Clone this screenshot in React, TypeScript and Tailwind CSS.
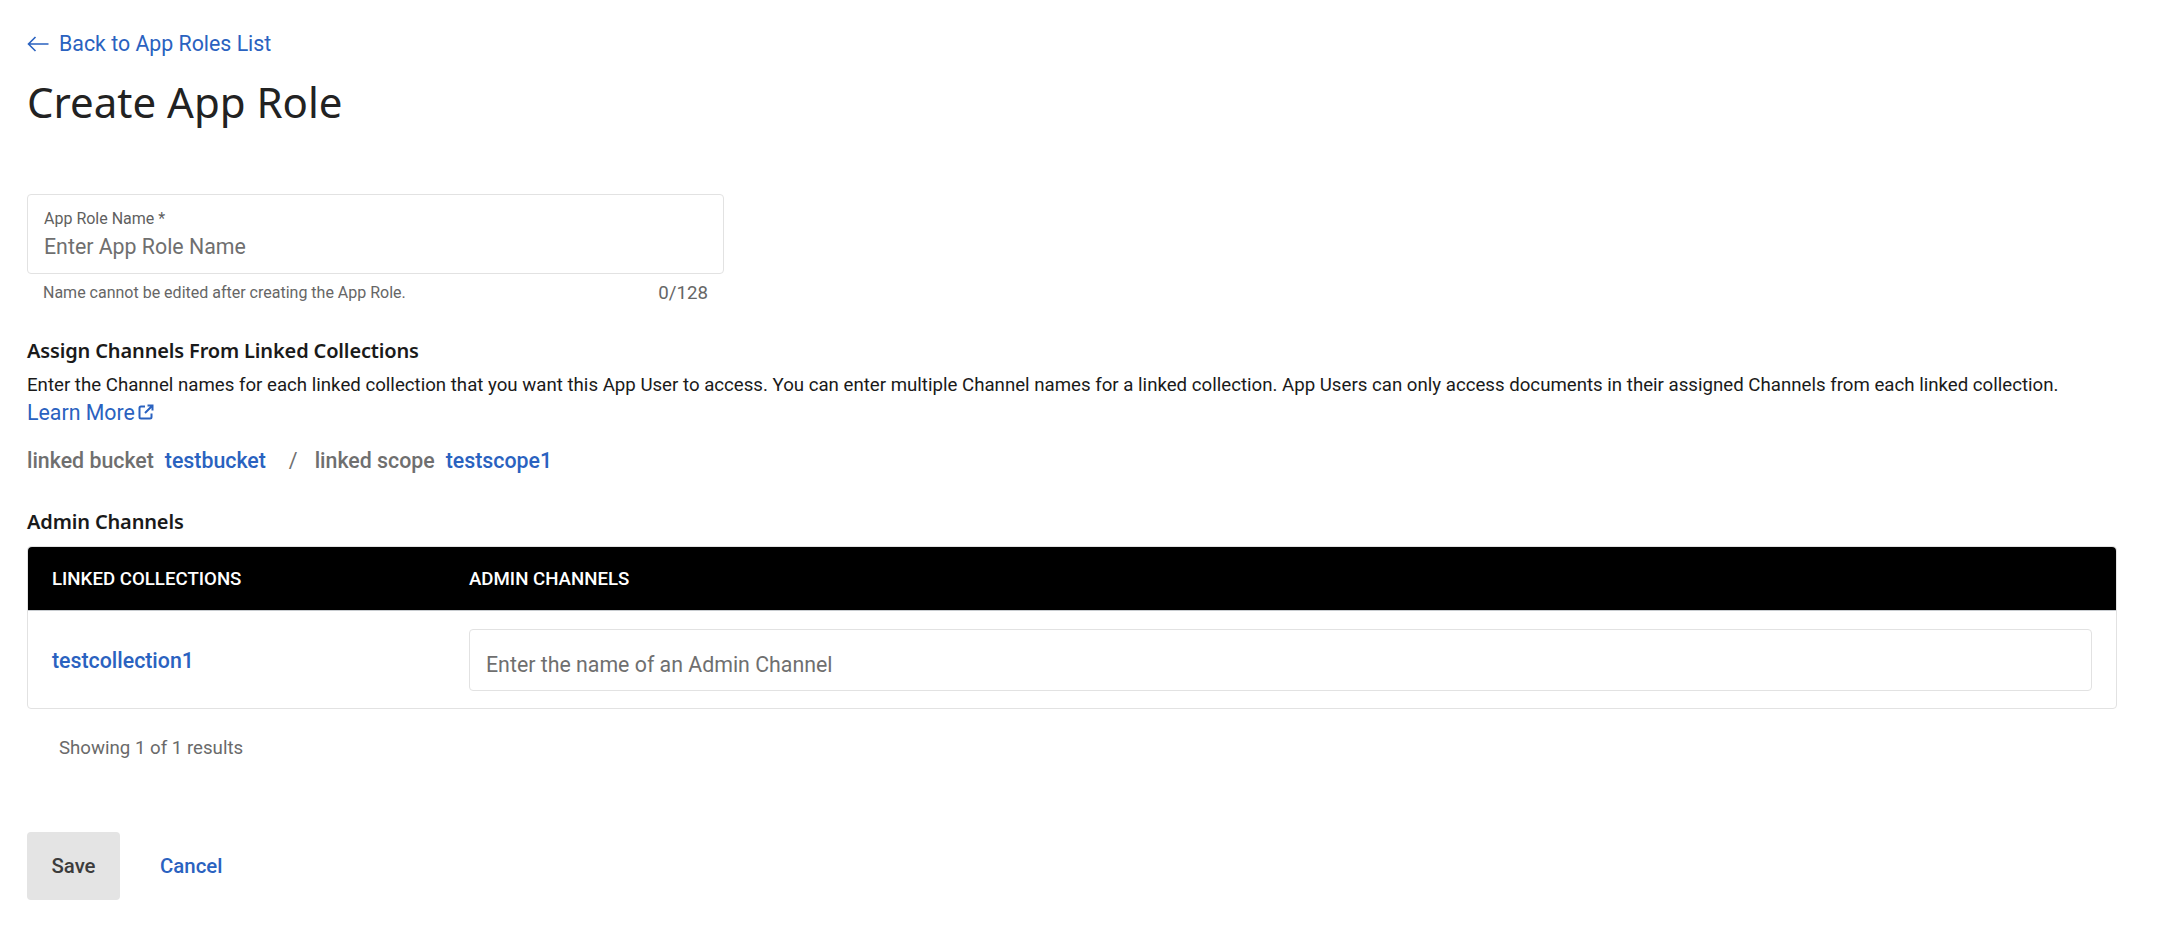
import React from 'react';

const LINK = 'text-[#2a62c0]';

const Heading: React.FC<{ className?: string; children: React.ReactNode }> = ({ className = '', children }) => (
  <h2 className={`font-['Noto_Sans',sans-serif] text-[20px] leading-[26px] font-semibold tracking-[-0.15px] text-[#1a1a1a] ${className}`}>{children}</h2>
);

const App: React.FC = () => {
  return (
    <div className="min-h-[930px] bg-white pt-[31px] pl-[27px] pr-[57px] font-['Roboto',sans-serif] text-[#1f1f1f]">
      <a className={`flex items-center h-[26px] text-[21.33px] leading-[26px] ${LINK}`}>
        <svg width="22" height="16" viewBox="0 0 22 16" fill="none" stroke="currentColor" strokeWidth="1.6" className="mr-[10px]">
          <path d="M21.5 8H1.5M8.5 1L1.5 8L8.5 15" />
        </svg>
        Back to App Roles List
      </a>
      <h1 className="mt-[17px] font-['Noto_Sans',sans-serif] text-[42px] leading-[56px] font-normal text-[#222]">Create App Role</h1>

      <div className="mt-[64px] w-[697px]">
        <div className="h-[80px] rounded-[4px] border border-[#e2e2e2] px-4 pt-[15px]">
          <label className="block text-[16px] leading-[18px] text-[#5f5f5f]">App Role Name *</label>
          <input
            placeholder="Enter App Role Name"
            className="mt-[4px] block w-full text-[21.33px] leading-[29px] outline-none placeholder:text-[#6f6f6f]"
          />
        </div>
        <div className="mt-[9px] flex items-center justify-between px-4 text-[#666]">
          <span className="text-[16px] leading-[20px]">Name cannot be edited after creating the App Role.</span>
          <span className="text-[18.67px] leading-[20px]">0/128</span>
        </div>
      </div>

      <Heading className="mt-[35px]">Assign Channels From Linked Collections</Heading>
      <p className="mt-[7px] text-[18.67px] leading-[28px] text-[#1a1a1a]">
        Enter the Channel names for each linked collection that you want this App User to access. You can enter multiple Channel names for a linked collection. App Users can only access documents in their assigned Channels from each linked collection.
      </p>
      <a className={`flex items-center text-[21.33px] leading-[28px] ${LINK}`}>
        Learn More
        <svg width="16" height="16" viewBox="0 0 16 16" fill="none" stroke="currentColor" strokeWidth="2" className="ml-[3px] mb-[2px]">
          <path d="M7 2.5H3A1.5 1.5 0 0 0 1.5 4V13A1.5 1.5 0 0 0 3 14.5H12A1.5 1.5 0 0 0 13.5 13V9.5M9.5 1.5H14.5V6.5M14.5 1.5L7 9" />
        </svg>
      </a>

      <div className="mt-[20px] flex items-center text-[21.33px] leading-[28px] font-medium">
        <span className="text-[#6f6f6f]">linked bucket</span>
        <span className={`ml-[11px] ${LINK}`}>testbucket</span>
        <span className="ml-[23px] text-[#6f6f6f] font-normal">/</span>
        <span className="ml-[17px] text-[#6f6f6f]">linked scope</span>
        <span className={`ml-[11px] ${LINK}`}>testscope1</span>
      </div>

      <Heading className="mt-[34px]">Admin Channels</Heading>

      <div className="mt-[11px] rounded-[4px] border border-[#e2e2e2]">
        <div className="flex h-[64px] items-center rounded-t-[4px] border-b border-[#c8ccd0] bg-black pl-[24px] text-[18.67px] font-medium text-white">
          <div className="w-[417px]">LINKED COLLECTIONS</div>
          <div>ADMIN CHANNELS</div>
        </div>
        <div className="flex h-[97px] items-center px-[24px]">
          <div className={`w-[417px] pt-[3px] text-[21.33px] font-medium ${LINK}`}>testcollection1</div>
          <input
            placeholder="Enter the name of an Admin Channel"
            className="h-[62px] flex-1 rounded-[4px] border border-[#e2e2e2] px-4 pt-[10px] text-[21.33px] outline-none placeholder:text-[#6f6f6f]"
          />
        </div>
      </div>

      <p className="mt-[26px] pl-[32px] text-[18.67px] leading-[26px] text-[#6a6a6a]">Showing 1 of 1 results</p>

      <div className="mt-[71px] flex items-center">
        <button className="h-[68px] w-[93px] rounded-[4px] bg-[#e4e4e4] text-[20.4px] font-medium text-[#3c3c3c]">Save</button>
        <a className={`ml-[40px] text-[20.4px] font-medium ${LINK}`}>Cancel</a>
      </div>
    </div>
  );
};

export default App;
